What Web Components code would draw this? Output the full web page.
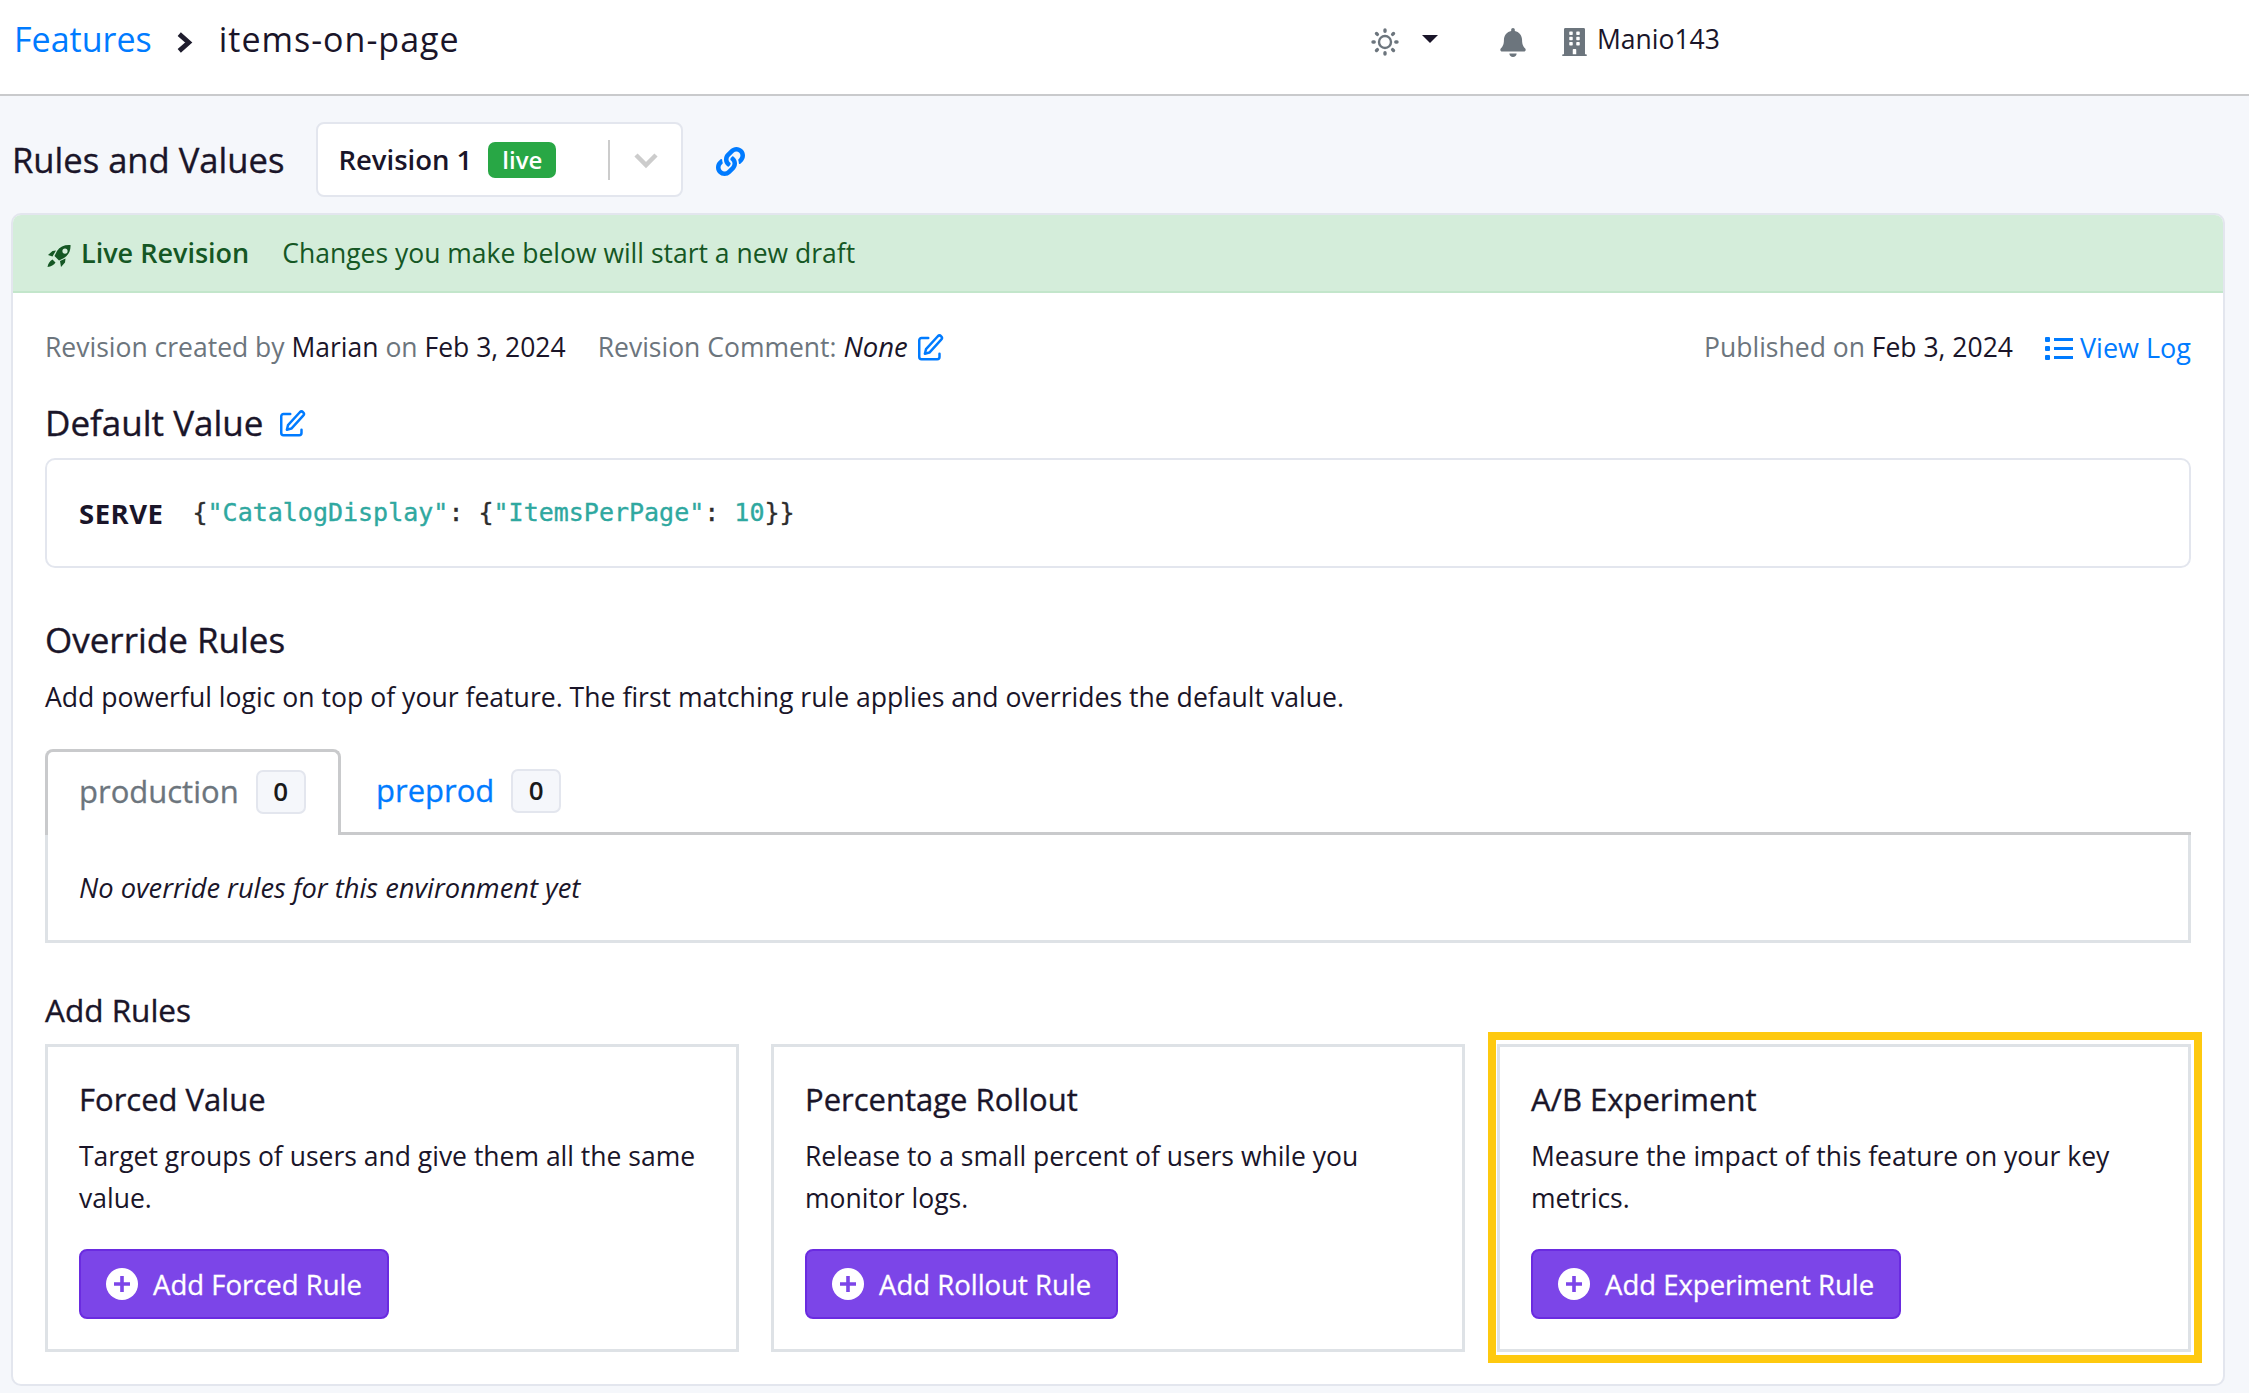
<!DOCTYPE html>
<html>
<head>
<meta charset="utf-8">
<title>items-on-page</title>
<style>
  html, body { margin: 0; padding: 0; }
  body {
    width: 2249px;
    height: 1393px;
    overflow: hidden;
    position: relative;
    background: #f5f7fb;
    color: #1a1529;
    font: 26.5px/39px "Open Sans", sans-serif;
  }
</style>
</head>
<body>

<gb-navbar></gb-navbar>

<gb-page-header></gb-page-header>

<gb-panel>
  <gb-alert></gb-alert>
  <gb-meta></gb-meta>
  <gb-heading top="31" edit>Default Value</gb-heading>
  <gb-code-box></gb-code-box>
  <gb-heading top="47">Override Rules</gb-heading>
  <gb-lead>Add powerful logic on top of your feature. The first matching rule applies and overrides the default value.</gb-lead>
  <gb-env-tabs></gb-env-tabs>
  <gb-add-rules>
    <gb-rule-card heading="Forced Value" action="Add Forced Rule">Target groups of users and give them all the same value.</gb-rule-card>
    <gb-rule-card heading="Percentage Rollout" action="Add Rollout Rule">Release to a small percent of users while you monitor logs.</gb-rule-card>
    <gb-rule-card heading="A/B Experiment" action="Add Experiment Rule">Measure the impact of this feature on your key metrics.</gb-rule-card>
  </gb-add-rules>
</gb-panel>

<gb-highlight></gb-highlight>

<script>
const ICONS = {
  chevron: `<svg viewBox="0 0 16 20" width="17" height="21"><path d="M3 2l9 8-9 8" fill="none" stroke="#1f1d2e" stroke-width="4.6"/></svg>`,
  sun: `<svg viewBox="0 0 28 28" width="28" height="28" fill="none" stroke="#6c757d" stroke-linecap="round"><circle cx="14" cy="14" r="6" stroke-width="2.4"/><path stroke-width="3.4" d="M14 2v1.2M14 24.8V26M2 14h1.2M24.8 14H26M5.5 5.5l.9.9M21.6 21.6l.9.9M5.5 22.5l.9-.9M21.6 6.4l.9-.9"/></svg>`,
  bell: `<svg viewBox="0 0 448 512" width="26" height="29" fill="#6c757d"><path d="M224 512c35.32 0 63.97-28.65 63.97-64H160.03c0 35.35 28.65 64 63.97 64zm215.39-149.71c-19.32-20.76-55.47-51.99-55.47-154.29 0-77.7-54.48-139.9-127.94-155.16V32c0-17.67-14.32-32-31.98-32s-31.98 14.33-31.98 32v20.84C118.56 68.1 64.08 130.3 64.08 208c0 102.3-36.15 133.53-55.47 154.29-6 6.45-8.66 14.16-8.61 21.71.11 16.4 12.98 32 32.1 32h383.8c19.12 0 32-15.6 32.1-32 .05-7.55-2.61-15.27-8.61-21.71z"/></svg>`,
  building: `<svg viewBox="0 0 448 512" width="25" height="28" fill="#6c757d"><path d="M436 480h-20V24c0-13.255-10.745-24-24-24H56C42.745 0 32 10.745 32 24v456H12c-6.627 0-12 5.373-12 12v20h448v-20c0-6.627-5.373-12-12-12zM128 76c0-6.627 5.373-12 12-12h40c6.627 0 12 5.373 12 12v40c0 6.627-5.373 12-12 12h-40c-6.627 0-12-5.373-12-12V76zm0 96c0-6.627 5.373-12 12-12h40c6.627 0 12 5.373 12 12v40c0 6.627-5.373 12-12 12h-40c-6.627 0-12-5.373-12-12v-40zm52 148h-40c-6.627 0-12-5.373-12-12v-40c0-6.627 5.373-12 12-12h40c6.627 0 12 5.373 12 12v40c0 6.627-5.373 12-12 12zm76 160h-64v-84c0-6.627 5.373-12 12-12h40c6.627 0 12 5.373 12 12v84zm64-172c0 6.627-5.373 12-12 12h-40c-6.627 0-12-5.373-12-12v-40c0-6.627 5.373-12 12-12h40c6.627 0 12 5.373 12 12v40zm0-96c0 6.627-5.373 12-12 12h-40c-6.627 0-12-5.373-12-12v-40c0-6.627 5.373-12 12-12h40c6.627 0 12 5.373 12 12v40zm0-96c0 6.627-5.373 12-12 12h-40c-6.627 0-12-5.373-12-12V76c0-6.627 5.373-12 12-12h40c6.627 0 12 5.373 12 12v40z"/></svg>`,
  link: `<svg viewBox="0 0 512 512" width="29" height="29" fill="#007bff"><path d="M326.612 185.391c59.747 59.809 58.927 155.698.36 214.59-.11.12-.24.25-.36.37l-67.2 67.2c-59.27 59.27-155.699 59.262-214.96 0-59.27-59.26-59.27-155.7 0-214.96l37.106-37.106c9.84-9.84 26.786-3.3 27.294 10.606.648 17.722 3.826 35.527 9.69 52.721 1.986 5.822.567 12.262-3.783 16.612l-13.087 13.087c-28.026 28.026-28.905 73.66-1.155 101.96 28.024 28.579 74.086 28.749 102.325.51l67.2-67.19c28.191-28.191 28.073-73.757 0-101.83-3.701-3.694-7.429-6.564-10.341-8.569a16.037 16.037 0 0 1-6.947-12.606c-.396-10.567 3.348-21.456 11.698-29.806l21.054-21.055c5.521-5.521 14.182-6.199 20.584-1.731a152.482 152.482 0 0 1 20.522 17.197zM467.547 44.449c-59.261-59.262-155.69-59.27-214.96 0l-67.2 67.2c-.12.12-.25.25-.36.37-58.566 58.892-59.387 154.781.36 214.59a152.454 152.454 0 0 0 20.521 17.196c6.402 4.468 15.064 3.789 20.584-1.731l21.054-21.055c8.35-8.35 12.094-19.239 11.698-29.806a16.037 16.037 0 0 0-6.947-12.606c-2.912-2.005-6.64-4.875-10.341-8.569-28.073-28.073-28.191-73.639 0-101.83l67.2-67.19c28.239-28.239 74.3-28.069 102.325.51 27.75 28.3 26.872 73.934-1.155 101.96l-13.087 13.087c-4.35 4.35-5.769 10.79-3.783 16.612 5.864 17.194 9.042 34.999 9.69 52.721.509 13.906 17.454 20.446 27.294 10.606l37.106-37.106c59.271-59.259 59.271-155.699.001-214.959z"/></svg>`,
  rocket: `<svg viewBox="7 9 24 24" width="24" height="24" fill="#155724"><path fill-rule="evenodd" d="M30.5 10c-6-.4-10.500 1.500-13.500 6l-2.500 5 4.500 4.500 5-2.500c4.500-3 6.900-7.500 6.500-13zM25 13.500a2.600 2.600 0 1 1 0 5.200 2.600 2.600 0 0 1 0-5.200z"/><path d="M8 20l4.500-4 3.500-.500-3.500 6zM20 26l5.500-2.500-.500 4-4 4.500zM12.500 24.500l3 3c-1.500 2.500-4.500 4-8 4.500.500-3.500 2.500-6 5-7.500z"/></svg>`,
  edit: `<svg viewBox="0 0 24 24" width="27" height="27" fill="none" stroke="#007bff" stroke-width="2.2" stroke-linecap="round" stroke-linejoin="round"><path d="M10 3.500H4a2 2 0 0 0-2 2v15a2 2 0 0 0 2 2h14a2 2 0 0 0 2-2v-3"/><path d="M18.500 2a2.100 2.100 0 0 1 3 3L11 16.500l-4 1 1-4L18.500 2z"/></svg>`,
  list: `<svg viewBox="0 0 28 24" width="28" height="24" fill="#007bff"><rect x="0" y="1" width="5" height="5" rx="1"/><rect x="0" y="10" width="5" height="5" rx="1"/><rect x="0" y="19" width="5" height="5" rx="1"/><rect x="9" y="2" width="19" height="3"/><rect x="9" y="11" width="19" height="3"/><rect x="9" y="20" width="19" height="3"/></svg>`,
  plus: `<svg viewBox="0 0 32 32" width="32" height="32"><circle cx="16" cy="16" r="16" fill="#fff"/><path d="M16 8v16M8 16h16" stroke="#7c45e8" stroke-width="3.600"/></svg>`,
  dropdown: `<svg viewBox="0 0 26 16" width="26" height="16"><path d="M3 2l10 10L23 2" fill="none" stroke="#cccccc" stroke-width="4.500"/></svg>`
};

class GbElement extends HTMLElement {
  constructor() {
    super();
    this.shadowDOM = this.attachShadow({mode: "open"});
  }
  connectedCallback() {
    this.render();
  }
}

class GbNavbar extends GbElement {
  render() {
    this.shadowDOM.innerHTML = `
    <style>
      :host { display: flex; align-items: center; box-sizing: border-box; height: 96px; background: #fff; border-bottom: 2px solid #c9cacc; padding: 0 0 16px 14px; }
      a { color: #007bff; font-size: 34px; line-height: 46px; }
      .chev { display: flex; margin: 6px 26px 0 24px; }
      .page { font-size: 34px; line-height: 46px; letter-spacing: 1px; }
      .right { position: absolute; top: 26px; left: 1371px; display: flex; align-items: center; height: 32px; }
      .right svg { display: block; }
      .caret { width: 0; height: 0; border: 8px solid transparent; border-top: 8px solid #1a1529; border-bottom: 0; margin: 0 62px 6px 23px; }
      .building { margin-left: 36px; }
      .user { margin-left: 10px; color: #1a1529; margin-top: -5px; }
    </style>
    <a>Features</a>
    <span class="chev">${ICONS.chevron}</span>
    <span class="page">items-on-page</span>
    <div class="right">
      ${ICONS.sun}
      <span class="caret"></span>
      ${ICONS.bell}
      <span class="building">${ICONS.building}</span>
      <span class="user">Manio143</span>
    </div>`;
  }
}
customElements.define("gb-navbar", GbNavbar);

class GbPageHeader extends GbElement {
  render() {
    this.shadowDOM.innerHTML = `
    <style>
      :host { display: flex; align-items: center; padding: 26px 0 16px 12px; }
      h1 { margin: 1px 32px 0 0; font-size: 34.6px; line-height: 74px; font-weight: 400; -webkit-text-stroke: .35px; }
      .select { box-sizing: border-box; width: 367px; height: 75px; background: #fff; border: 2px solid #e3e6ee; border-radius: 8px; display: flex; align-items: center; padding-left: 20px; }
      .rev { font-weight: 600; font-size: 27.5px; }
      .live { background: #28a745; color: #fff; font-weight: 600; font-size: 24px; line-height: 36px; width: 68px; text-align: center; border-radius: 7px; margin-left: 16px; }
      .sep { width: 2px; height: 40px; background: #ccc; margin-left: 52px; }
      .dd { margin: 3px 0 0 23px; display: flex; }
      .link { margin: 3px 0 0 33px; display: flex; }
    </style>
    <h1>Rules and Values</h1>
    <div class="select">
      <span class="rev">Revision 1</span>
      <span class="live">live</span>
      <span class="sep"></span>
      <span class="dd">${ICONS.dropdown}</span>
    </div>
    <span class="link">${ICONS.link}</span>`;
  }
}
customElements.define("gb-page-header", GbPageHeader);

class GbPanel extends GbElement {
  render() {
    this.shadowDOM.innerHTML = `
    <style>
      :host { display: block; box-sizing: border-box; margin-left: 11px; width: 2214px; height: 1173px; background: #fff; border: 2px solid #e3e6ee; border-radius: 10px; overflow: hidden; }
    </style>
    <slot></slot>`;
  }
}
customElements.define("gb-panel", GbPanel);

class GbAlert extends GbElement {
  render() {
    this.shadowDOM.innerHTML = `
    <style>
      :host { display: flex; align-items: center; box-sizing: border-box; height: 78px; background: #d4edda; color: #155724; border-bottom: 2px solid #c3e6cb; padding-left: 34px; }
      svg { display: block; margin-top: 5px; }
      b { font-weight: 600; margin: -1px 33px 0 10px; font-size: 27px; }
    </style>
    ${ICONS.rocket}<b>Live Revision</b><span>Changes you make below will start a new draft</span>`;
  }
}
customElements.define("gb-alert", GbAlert);

class GbMeta extends GbElement {
  render() {
    this.shadowDOM.innerHTML = `
    <style>
      :host { display: flex; align-items: center; justify-content: space-between; height: 39px; padding: 35px 32px 0; color: #6c757d; }
      .side { display: flex; align-items: center; }
      em, strong { color: #1a1529; font-weight: 400; }
      em { font-size: 27.5px; line-height: 1; }
      .gap { margin-left: 32px; }
      svg { display: block; }
      .edit { margin-left: 9px; }
      .log { color: #007bff; margin-left: 32px; display: flex; align-items: center; gap: 7px; font-size: 27px; }
    </style>
    <div class="side">
      <span>Revision created by <strong>Marian</strong> on <strong>Feb 3, 2024</strong></span>
      <span class="gap">Revision Comment: <em>None</em></span>
      <span class="edit">${ICONS.edit}</span>
    </div>
    <div class="side">
      <span>Published on <strong>Feb 3, 2024</strong></span>
      <span class="log">${ICONS.list}<span>View Log</span></span>
    </div>`;
  }
}
customElements.define("gb-meta", GbMeta);

class GbHeading extends GbElement {
  render() {
    const top = this.getAttribute("top") || 0;
    const edit = this.hasAttribute("edit") ? `<span class="edit">${ICONS.edit}</span>` : "";
    this.shadowDOM.innerHTML = `
    <style>
      :host { display: flex; align-items: center; padding: ${top}px 32px 0; font-size: 35px; line-height: 50px; font-weight: 400; -webkit-text-stroke: .35px; }
      .edit { display: flex; margin-left: 16px; }
    </style>
    <slot></slot>${edit}`;
  }
}
customElements.define("gb-heading", GbHeading);

class GbCodeBox extends GbElement {
  render() {
    this.shadowDOM.innerHTML = `
    <style>
      :host { display: flex; align-items: center; box-sizing: border-box; margin: 10px 32px 0; height: 110px; border: 2px solid #e3e6ee; border-radius: 10px; padding-left: 32px; }
      b { font-weight: 700; font-size: 27.5px; letter-spacing: .5px; margin-right: 29px; }
      code { font: 400 25px/36px "DejaVu Sans Mono", monospace; color: #2d2d2d; -webkit-text-stroke: .35px; }
      i { font-style: normal; color: #2fa8a0; }
    </style>
    <b>SERVE</b>
    <code>{<i>"CatalogDisplay"</i>: {<i>"ItemsPerPage"</i>: <i>10</i>}}</code>`;
  }
}
customElements.define("gb-code-box", GbCodeBox);

class GbLead extends GbElement {
  render() {
    this.shadowDOM.innerHTML = `
    <style>
      :host { display: block; padding: 13px 32px 0; font-size: 26.6px; }
    </style>
    <slot></slot>`;
  }
}
customElements.define("gb-lead", GbLead);

class GbEnvTabs extends GbElement {
  render() {
    this.shadowDOM.innerHTML = `
    <style>
      :host { display: block; margin: 32px 32px 0; }
      .bar { display: flex; height: 83px; border-bottom: 3px solid #c9cacc; }
      .tab { display: flex; align-items: center; box-sizing: border-box; height: 86px; padding: 0 31px 3px; font-size: 31px; -webkit-text-stroke: .3px; }
      .active { width: 296px; color: #6c757d; background: #fff; border: 3px solid #c9cacc; border-bottom: 0; border-radius: 8px 8px 0 0; padding-bottom: 4px; }
      .link { color: #007bff; padding-left: 35px; }
      .count { box-sizing: border-box; width: 50px; height: 44px; margin-left: 17px; background: #f5f7fb; border: 2px solid #e3e6ee; border-radius: 7px; color: #1a1a1a; font-size: 26px; font-weight: 600; line-height: 39px; text-align: center; -webkit-text-stroke: 0; }
      .pane { box-sizing: border-box; height: 108px; padding: 33px 31px 0; border: 3px solid #dee2e6; border-top: 0; font-style: italic; font-size: 27.3px; }
    </style>
    <div class="bar">
      <div class="tab active"><span>production</span><span class="count">0</span></div>
      <div class="tab link"><span>preprod</span><span class="count">0</span></div>
    </div>
    <div class="pane">No override rules for this environment yet</div>`;
  }
}
customElements.define("gb-env-tabs", GbEnvTabs);

class GbAddRules extends GbElement {
  render() {
    this.shadowDOM.innerHTML = `
    <style>
      :host { display: block; padding: 46px 32px 0; }
      h4 { margin: 0 0 13px; font-size: 31.5px; line-height: 42px; font-weight: 400; -webkit-text-stroke: .35px; }
      .grid { display: grid; grid-template-columns: repeat(3, 1fr); gap: 32px; }
    </style>
    <h4>Add Rules</h4>
    <div class="grid"><slot></slot></div>`;
  }
}
customElements.define("gb-add-rules", GbAddRules);

class GbRuleCard extends GbElement {
  render() {
    this.shadowDOM.innerHTML = `
    <style>
      :host { display: block; box-sizing: border-box; height: 308px; border: 3px solid #dee2e6; padding: 30px 31px 0; }
      h4 { margin: 0 0 14px; font-size: 31px; line-height: 44px; font-weight: 400; -webkit-text-stroke: .35px; }
      p { margin: 0 0 30px; line-height: 42px; }
      button { display: inline-flex; align-items: center; gap: 15px; box-sizing: border-box; height: 70px; padding: 0 25px; background: #7c45e8; border: 2px solid #6a2be0; border-radius: 8px; color: #fff; font: 400 27.5px/39px "Open Sans", sans-serif; -webkit-text-stroke: .3px; }
      svg { display: block; }
    </style>
    <h4>${this.getAttribute("heading")}</h4>
    <p><slot></slot></p>
    <button>${ICONS.plus}<span>${this.getAttribute("action")}</span></button>`;
  }
}
customElements.define("gb-rule-card", GbRuleCard);

// yellow annotation drawn on top of the third card
class GbHighlight extends GbElement {
  render() {
    this.shadowDOM.innerHTML = `
    <style>
      :host { position: absolute; left: 1488px; top: 1032px; width: 714px; height: 331px; box-sizing: border-box; border: 8px solid #fec90f; }
    </style>`;
  }
}
customElements.define("gb-highlight", GbHighlight);
</script>
</body>
</html>
